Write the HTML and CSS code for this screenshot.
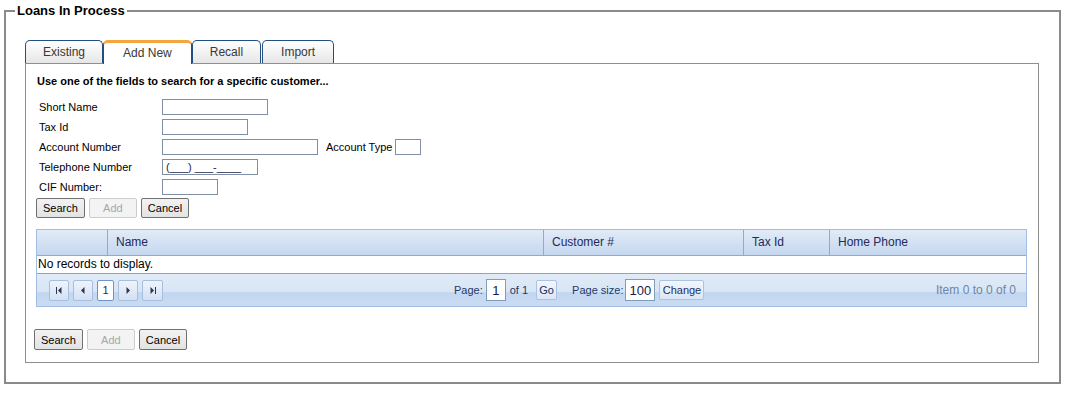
FILE: index.html
```html
<!DOCTYPE html>
<html>
<head>
<meta charset="utf-8">
<title>Loans In Process</title>
<link rel="stylesheet" href="styles.css">
</head>
<body>
<fieldset class="lip">
  <legend class="lip-title">Loans In Process</legend>
  <div class="tabs">
    <div class="tab">Existing</div>
    <div class="tab tab-active">Add New</div>
    <div class="tab">Recall</div>
    <div class="tab tab-wide">Import</div>
  </div>
  <div class="panel">
    <div class="hint">Use one of the fields to search for a specific customer...</div>
    <div class="form">
      <label class="lbl">Short Name</label>
      <div class="fld"><input class="inp w106" type="text"></div>
      <label class="lbl">Tax Id</label>
      <div class="fld"><input class="inp w86" type="text"></div>
      <label class="lbl">Account Number</label>
      <div class="fld"><input class="inp w156" type="text"><span class="lbl-inline">Account Type</span><input class="inp w26 inp-type" type="text"></div>
      <label class="lbl">Telephone Number</label>
      <div class="fld"><input class="inp w96 inp-mask" type="text" value="(___) ___-____"></div>
      <label class="lbl">CIF Number:</label>
      <div class="fld"><input class="inp w56" type="text"></div>
    </div>
    <div class="btns btns-top">
      <button class="btn">Search</button>
      <button class="btn" disabled>Add</button>
      <button class="btn">Cancel</button>
    </div>
    <div class="grid">
      <div class="grid-head">
        <div class="gh gh-first"></div>
        <div class="gh">Name</div>
        <div class="gh">Customer #</div>
        <div class="gh">Tax Id</div>
        <div class="gh">Home Phone</div>
      </div>
      <div class="grid-empty">No records to display.</div>
      <div class="pager">
        <div class="pg-nav">
          <span class="pg-btn"><svg width="6" height="7" viewBox="0 0 6 7"><rect x="0" y="0" width="1" height="7" fill="#2f3550"/><path d="M5.5 0 L2 3.5 L5.5 7Z" fill="#2f3550"/></svg></span>
          <span class="pg-btn"><svg width="4" height="7" viewBox="0 0 4 7"><path d="M3.5 0 L0 3.5 L3.5 7Z" fill="#2f3550"/></svg></span>
          <span class="pg-btn pg-num">1</span>
          <span class="pg-btn"><svg width="4" height="7" viewBox="0 0 4 7"><path d="M0.5 0 L4 3.5 L0.5 7Z" fill="#2f3550"/></svg></span>
          <span class="pg-btn pg-last"><svg width="6" height="7" viewBox="0 0 6 7"><path d="M0.5 0 L4 3.5 L0.5 7Z" fill="#2f3550"/><rect x="5" y="0" width="1" height="7" fill="#2f3550"/></svg></span>
        </div>
        <div class="pg-page">
          <span>Page:</span>
          <input class="pg-inp pg-inp-page" type="text" value="1">
          <span class="pg-of">of 1</span>
          <button class="pg-go">Go</button>
          <span class="pg-size">Page size:</span>
          <input class="pg-inp pg-inp-size" type="text" value="100">
          <button class="pg-go pg-change">Change</button>
        </div>
        <div class="pg-info">Item 0 to 0 of 0</div>
      </div>
    </div>
    <div class="btns btns-bottom">
      <button class="btn">Search</button>
      <button class="btn" disabled>Add</button>
      <button class="btn">Cancel</button>
    </div>
  </div>
</fieldset>
</body>
</html>
```

FILE: styles.css
```css
html, body {
  margin: 0;
  background: #ffffff;
  font-family: "Liberation Sans", Arial, sans-serif;
}

.lip {
  margin: 3px 8px 0 4px;
  padding: 20px 20px 19px 19px;
  border: 2px solid #8a8a8a;
  min-width: 0;
}

.lip-title {
  margin-left: -10px;
  padding: 0 2px;
  font: bold 13px/16px "Liberation Sans", Arial, sans-serif;
  color: #000;
}

/* Tabs */
.tabs {
  display: flex;
  align-items: flex-end;
  height: 23px;
  margin-top: 1px;
}

.tab {
  box-sizing: border-box;
  height: 23px;
  padding: 0 17px;
  border: 1px solid #234f80;
  border-bottom: 0;
  border-radius: 5px 5px 0 0;
  background: linear-gradient(#ffffff, #e6e6e6);
  font-size: 12px;
  line-height: 22px;
  color: #383838;
}

.tab-active {
  position: relative;
  z-index: 1;
  height: 24px;
  margin-bottom: -1px;
  padding: 0 19px;
  border-top: 3px solid #f4a640;
  background: #ffffff;
  line-height: 20px;
}

.tab-wide {
  margin-left: 1px;
  padding: 0 18px;
}

/* Panel */
.panel {
  border: 1px solid #8e8e8e;
  padding: 11px 11px 12px 8px;
}

.hint {
  padding-left: 3px;
  margin-bottom: 9px;
  font: bold 11px/13px "Liberation Sans", Arial, sans-serif;
  color: #000;
}

.form {
  margin-left: 2px;
  display: grid;
  grid-template-columns: 126px 1fr;
  grid-auto-rows: 20px;
  font-size: 11px;
  color: #000;
}

.lbl {
  padding-left: 3px;
  line-height: 21px;
}

.fld {
  display: flex;
  align-items: center;
}

.lbl-inline {
  margin-left: 8px;
}

.inp {
  box-sizing: border-box;
  height: 16px;
  margin: 0;
  padding: 0 3px;
  border: 1px solid #7f8fa6;
  background: #fff;
  font: 11px "Liberation Sans", Arial, sans-serif;
  color: #1a1a40;
  outline: none;
}

.w106 { width: 106px; }
.w86 { width: 86px; }
.w156 { width: 156px; }
.w96 { width: 96px; }
.w56 { width: 56px; }
.w26 { width: 26px; }

.inp-type {
  margin-left: 3px;
}

.inp-mask {
  color: #20204a;
}

/* Buttons */
.btns {
  display: flex;
  gap: 4px;
}

.btns-top {
  margin: 1px 0 0 2px;
}

.btns-bottom {
  margin-top: 22px;
}

.btn {
  box-sizing: border-box;
  height: 20px;
  min-width: 48px;
  margin: 0;
  padding: 0 6px;
  border: 1px solid #707070;
  border-radius: 2px;
  background: linear-gradient(#f2f2f2, #e3e3e3);
  font: 11px "Liberation Sans", Arial, sans-serif;
  color: #000;
}

.btns-bottom .btn {
  height: 21px;
}

.btn:disabled {
  border-color: #cdcdcd;
  background: #f3f3f3;
  color: #a6a6a6;
}

/* Grid */
.grid {
  margin: 11px 0 0 2px;
  border: 1px solid #a3bde2;
  font-size: 12px;
}

.grid-head {
  display: grid;
  grid-template-columns: 70px 436px 200px 86px 1fr;
  height: 25px;
  border-bottom: 1px solid #8aaad8;
  background: linear-gradient(#e2ebf7, #c5d7ef);
}

.gh {
  box-sizing: border-box;
  padding-left: 8px;
  border-left: 1px solid #8aaad8;
  line-height: 25px;
  color: #232a5c;
}

.gh-first {
  border-left: 0;
}

.grid-empty {
  height: 17px;
  padding-left: 1px;
  line-height: 17px;
  border-bottom: 1px solid #86a7d6;
  color: #000;
}

.pager {
  display: flex;
  align-items: center;
  height: 32px;
  padding: 0 10px 0 12px;
  background: linear-gradient(#e1ebf7 0%, #d8e5f5 56%, #c2d6f0 58%, #cadcf2 100%);
}

.pg-nav {
  display: flex;
  gap: 4px;
}

.pg-btn {
  box-sizing: border-box;
  display: flex;
  align-items: center;
  justify-content: center;
  width: 20px;
  height: 21px;
  border: 1px solid #a7bedf;
  border-radius: 2px;
  background: linear-gradient(#eef4fc, #d3e1f4);
}

.pg-num {
  width: 17px;
  border-color: #6f93c6;
  background: #ffffff;
  font-size: 11px;
  color: #15305e;
}

.pg-last {
  width: 21px;
}

.pg-page {
  display: flex;
  align-items: center;
  margin-left: 291px;
  font-size: 11px;
  color: #1e3966;
}

.pg-inp {
  box-sizing: border-box;
  height: 22px;
  margin: 0 0 0 3px;
  padding: 0 2px;
  border: 1px solid #7f9db9;
  background: #fff;
  font: 13px "Liberation Sans", Arial, sans-serif;
  color: #1a1a4a;
  outline: none;
}

.pg-inp-page {
  width: 20px;
  text-align: center;
}

.pg-inp-size {
  width: 30px;
  margin-left: 2px;
  padding-left: 3px;
}

.pg-of {
  margin-left: 4px;
}

.pg-go {
  box-sizing: border-box;
  height: 20px;
  width: 21px;
  margin: 0 0 0 8px;
  padding: 0;
  border: 1px solid #abc2e2;
  border-radius: 2px;
  background: linear-gradient(#f3f7fd, #dae6f6);
  font: 11px "Liberation Sans", Arial, sans-serif;
  color: #1b2f5c;
}

.pg-size {
  margin-left: 15px;
}

.pg-change {
  width: 45px;
  margin-left: 4px;
}

.pg-info {
  margin-left: auto;
  font-size: 12px;
  color: #6d85a6;
}
```
